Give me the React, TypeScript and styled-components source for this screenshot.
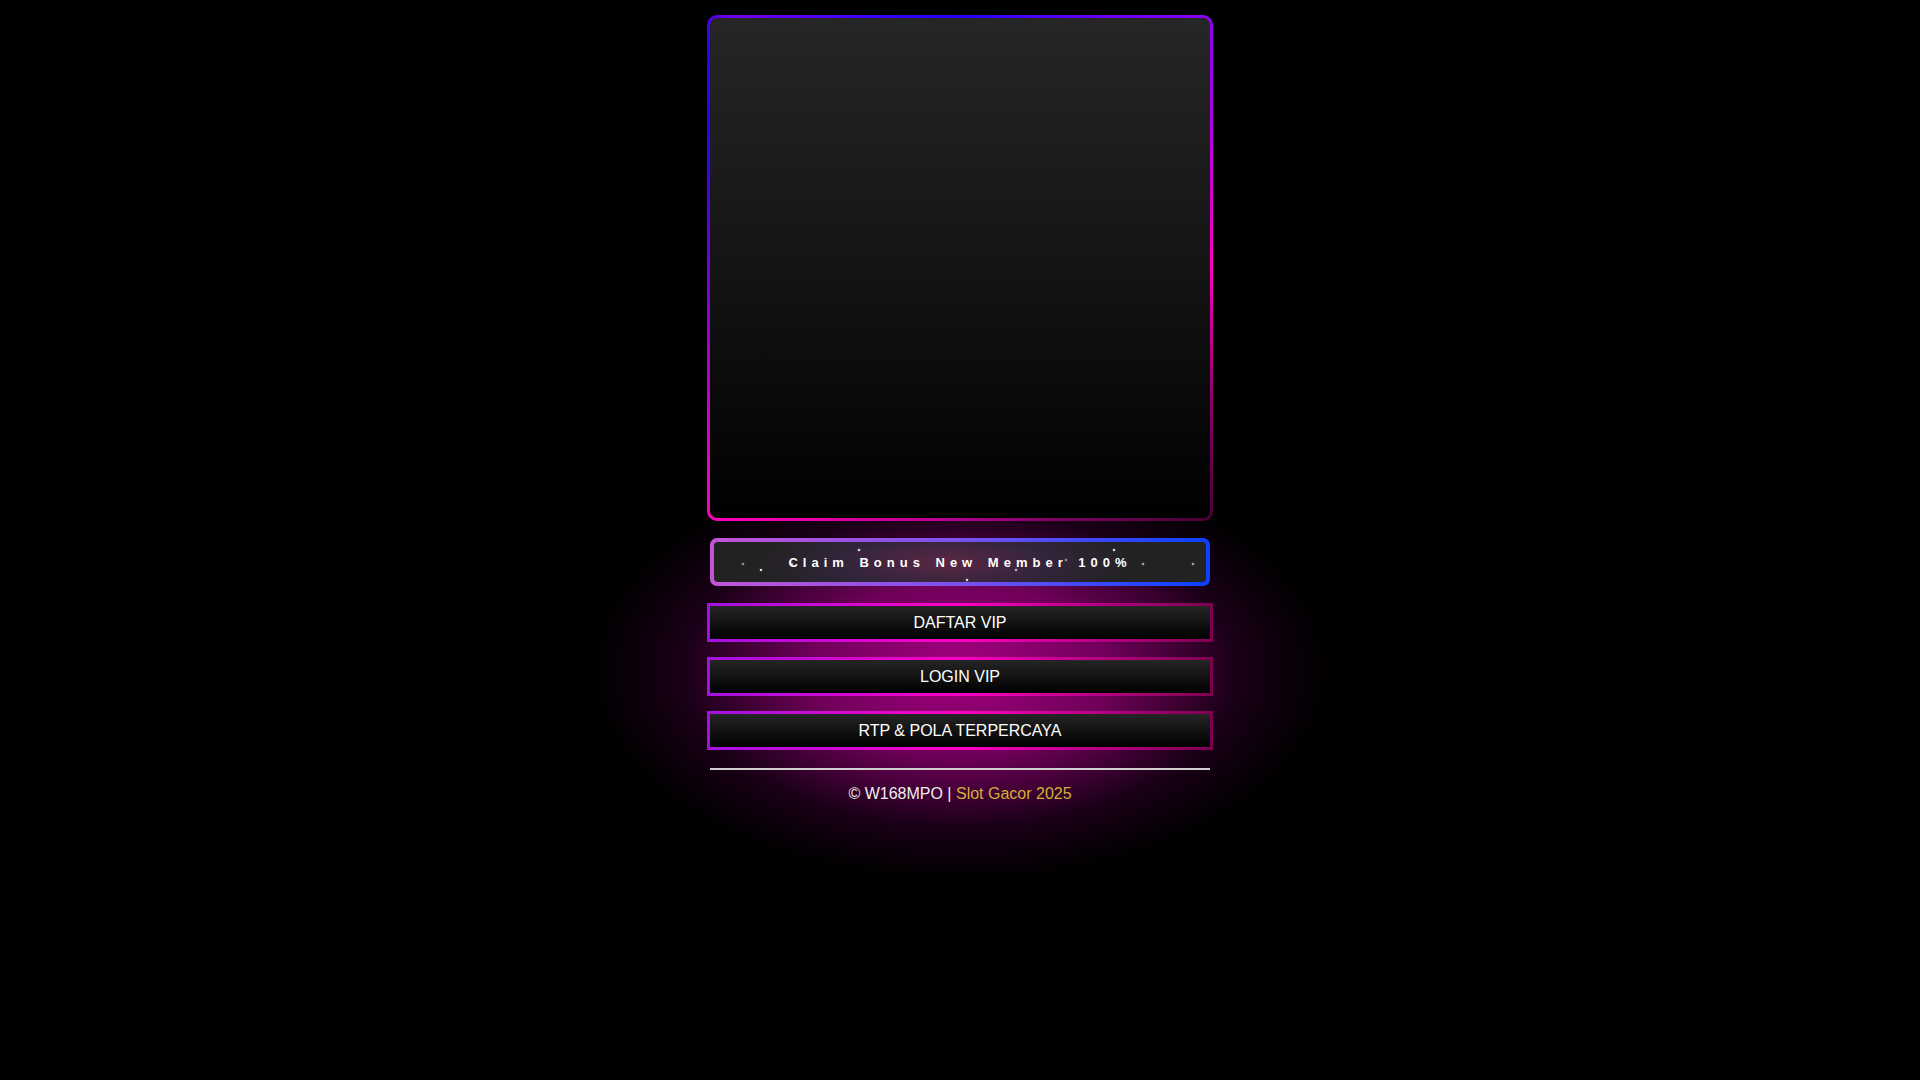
import styled, { createGlobalStyle } from "styled-components"

const GlobalStyle = createGlobalStyle`
  html, body {
    margin: 0;
    padding: 0;
    min-height: 100%;
  }
  body {
    min-height: 1080px;
    background-color: #000;
    background-image: radial-gradient(ellipse 370px 210px at 50% 670px, rgba(165, 0, 130, 1) 0%, rgba(125, 0, 100, 0.9) 40%, rgba(50, 0, 45, 0.5) 75%, rgba(0, 0, 0, 0) 100%);
    background-repeat: no-repeat;
    font-family: "Liberation Sans", Arial, sans-serif;
    color: #fff;
  }
`

const sparkles = [
  { x: 144, y: 7, s: 2, o: 1 },
  { x: 28, y: 21, s: 2, o: 0.6 },
  { x: 46, y: 27, s: 2, o: 1 },
  { x: 77, y: 21, s: 2, o: 0.7 },
  { x: 252, y: 37, s: 2, o: 1 },
  { x: 301, y: 27, s: 2, o: 0.8 },
  { x: 351, y: 17, s: 2, o: 0.6 },
  { x: 399, y: 7, s: 2, o: 1 },
  { x: 428, y: 21, s: 2, o: 0.7 },
  { x: 478, y: 21, s: 2, o: 0.7 },
]

const App = () => {
  return (
    <>
      <GlobalStyle />
      <Page>
        <BannerFrame>
          <Banner />
        </BannerFrame>

        <ClaimFrame>
          <ClaimInner>
            {sparkles.map((d, i) => (
              <Sparkle key={i} style={{ left: d.x, top: d.y, width: d.s, height: d.s, opacity: d.o }} />
            ))}
            <ClaimText>Claim Bonus New Member 100%</ClaimText>
          </ClaimInner>
        </ClaimFrame>

        <ButtonList>
          <MenuButton href="#">DAFTAR VIP</MenuButton>
          <MenuButton href="#">LOGIN VIP</MenuButton>
          <MenuButton href="#">RTP &amp; POLA TERPERCAYA</MenuButton>
        </ButtonList>

        <Divider />

        <Footer>
          © W168MPO | <Gold>Slot Gacor 2025</Gold>
        </Footer>
      </Page>
    </>
  )
}

export default App

const Page = styled.div`
  width: 500px;
  margin: 0 auto;
  padding-top: 15px;
  display: flex;
  flex-direction: column;
  align-items: center;
`

const BannerFrame = styled.div`
  width: 500px;
  height: 500px;
  padding: 3px;
  border-radius: 10px;
  background: conic-gradient(
    from 0deg at 50% 50%,
    #2400ff 0deg,
    #8a00f2 45deg,
    #ff00c0 90deg,
    #4a0038 135deg,
    #b0008c 180deg,
    #ff00b8 225deg,
    #8800d8 262deg,
    #2400ff 300deg,
    #2a00ff 312deg,
    #7000e6 318deg,
    #3a00ff 340deg,
    #2400ff 360deg
  );
  flex-shrink: 0;
`

const Banner = styled.div`
  width: 100%;
  height: 100%;
  border-radius: 7px;
  background: linear-gradient(180deg, #262626 0%, #141414 50%, #000 100%);
`

const ClaimFrame = styled.div`
  box-sizing: border-box;
  width: 500px;
  height: 48px;
  margin-top: 17px;
  padding: 4px;
  border-radius: 7px;
  background: linear-gradient(90deg, #c454d6 0%, #7a52ee 50%, #0a40ff 100%);
`

const ClaimInner = styled.div`
  position: relative;
  height: 100%;
  border-radius: 4px;
  background:
    radial-gradient(ellipse 190px 45px at 47% 50%, rgba(110, 40, 80, 0.75) 0%, rgba(70, 40, 90, 0.45) 55%, rgba(34, 34, 34, 0) 100%),
    #222;
  display: flex;
  align-items: center;
  justify-content: center;
  overflow: hidden;
`

const ClaimText = styled.span`
  position: relative;
  font-family: "Liberation Sans", Arial, sans-serif;
  font-weight: bold;
  font-size: 13px;
  letter-spacing: 5px;
  word-spacing: 2px;
  color: #fff;
  white-space: nowrap;
`

const Sparkle = styled.span`
  position: absolute;
  border-radius: 50%;
  background: #fff;
  box-shadow: 0 0 2px rgba(255, 255, 255, 0.8);
`

const ButtonList = styled.div`
  display: flex;
  flex-direction: column;
  gap: 15px;
  margin-top: 17px;
`

const MenuButton = styled.a`
  box-sizing: border-box;
  width: 506px;
  height: 39px;
  display: flex;
  align-items: center;
  justify-content: center;
  border: 3px solid transparent;
  border-image: linear-gradient(90deg, #a412e2 0%, #ff00c4 50%, #7e0050 100%) 1;
  background: linear-gradient(180deg, #252525 0%, #000 100%);
  color: #fff;
  font-family: "Liberation Sans", Arial, sans-serif;
  font-size: 16px;
  text-decoration: none;
`

const Divider = styled.div`
  width: 500px;
  height: 2px;
  margin-top: 18px;
  background: #d0d0d0;
`

const Footer = styled.p`
  margin: 14px 0 0;
  font-family: "Liberation Sans", Arial, sans-serif;
  font-size: 16px;
  line-height: 20px;
  color: #eee;
  text-align: center;
`

const Gold = styled.span`
  color: #d4af37;
`
